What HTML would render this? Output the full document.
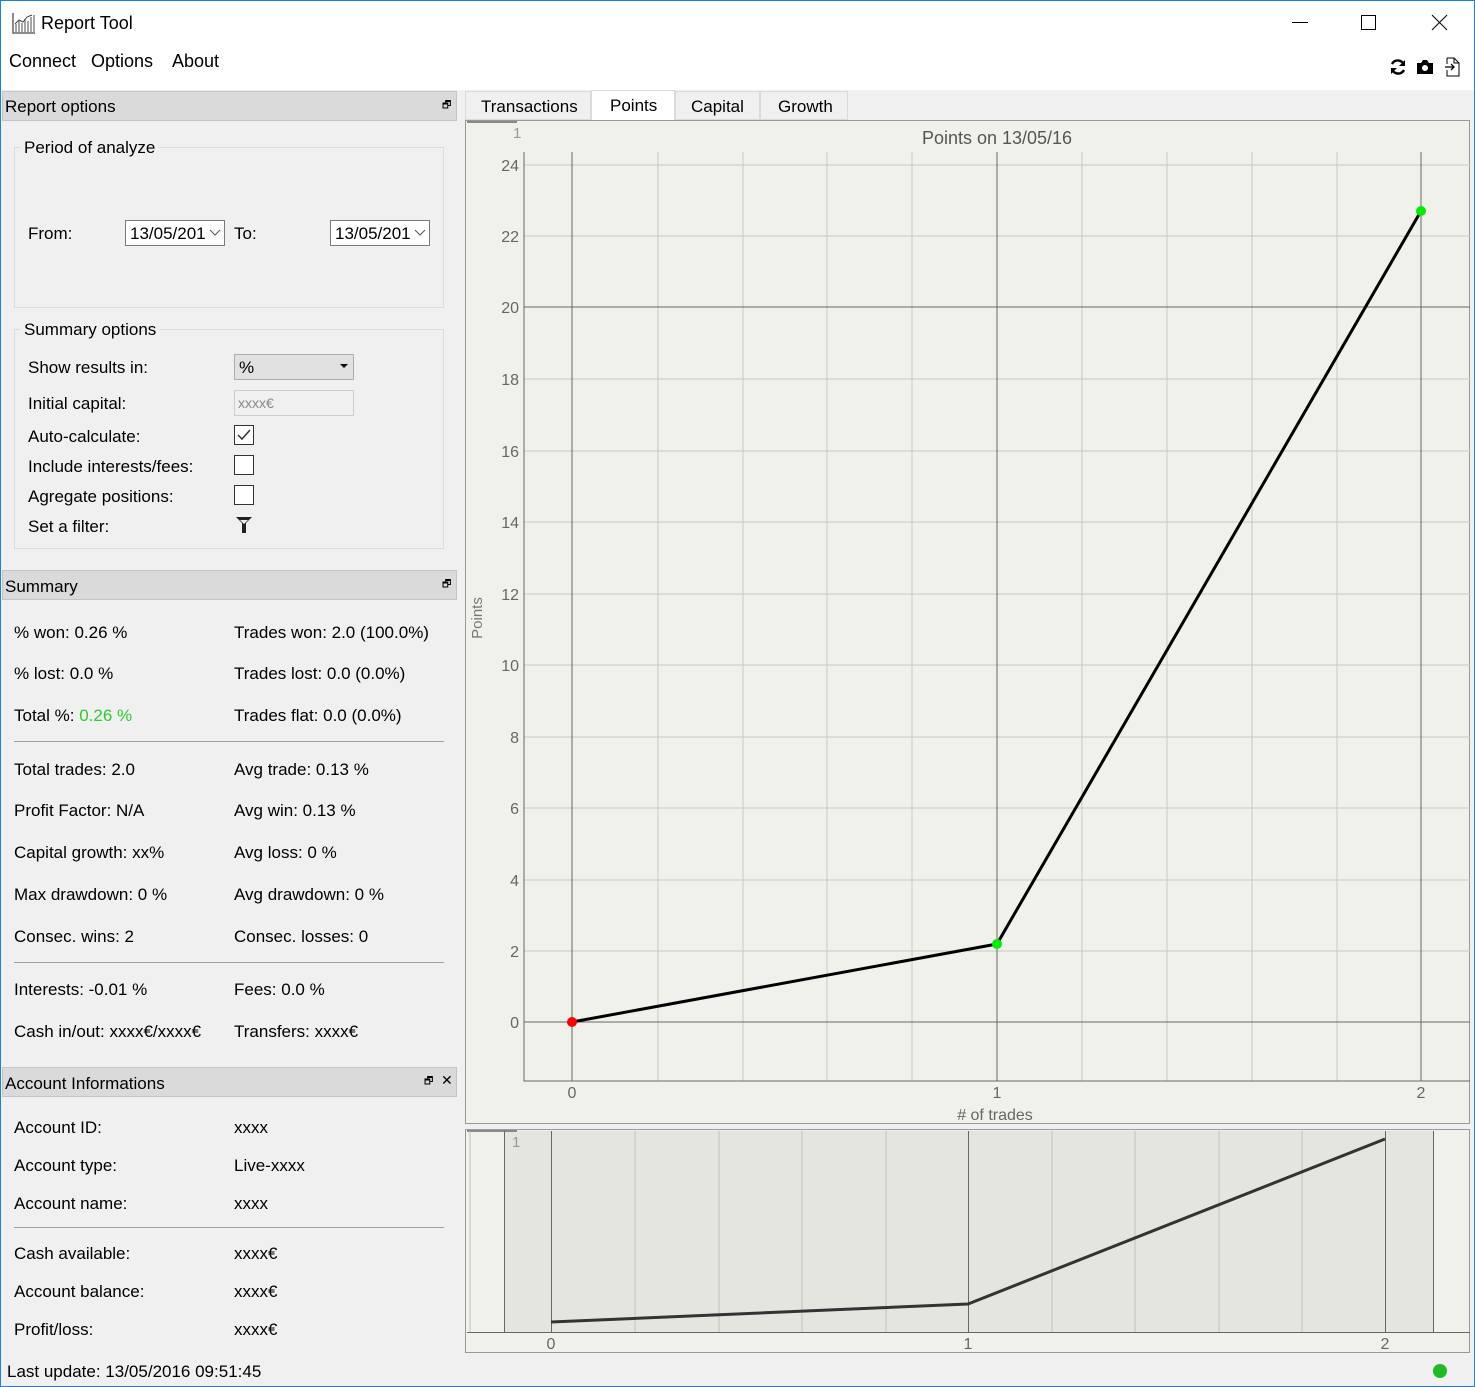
<!DOCTYPE html>
<html><head><meta charset="utf-8"><style>
*{margin:0;padding:0;box-sizing:border-box}
body{width:1475px;height:1387px;background:#f0f0f0;font-family:"Liberation Sans",sans-serif;font-size:16px;color:#000;position:relative;overflow:hidden}
.a{position:absolute;white-space:nowrap}
.win{position:absolute;left:0;top:0;width:1475px;height:1387px;border:1px solid #1883d7;pointer-events:none}
.hdr{position:absolute;left:2px;width:455px;height:30px;background:#dadada;border:1px solid #c4c4c4}
.grp{position:absolute;border:1px solid #dcdcdc}
.cb{position:absolute;width:20px;height:20px;border:1px solid #333;background:#fff}
.sep{position:absolute;left:14px;width:430px;height:1px;background:#a0a0a0}
</style></head><body>
<div class="a" style="left:0;top:0;width:1475px;height:90px;background:#fff"></div>
<svg class="a" style="left:12px;top:12px" width="24" height="22"><path d="M1 1V21H23" stroke="#666" fill="none" stroke-width="1.5"/><path d="M4 20V12M7 20V9M10 20V11M13 20V7M16 20V9M19 20V5M22 20V3" stroke="#888" stroke-width="1.5"/><path d="M3 12L7 8L11 10L15 5L20 3" stroke="#444" fill="none"/></svg>
<div class="a" style="left:41px;top:13px;font-size:18px">Report Tool</div>
<div class="a" style="left:9px;top:51px;font-size:18px">Connect</div>
<div class="a" style="left:91px;top:51px;font-size:18px">Options</div>
<div class="a" style="left:172px;top:51px;font-size:18px">About</div>
<div class="a" style="left:1292px;top:22px;width:16px;height:1px;background:#000"></div>
<div class="a" style="left:1361px;top:15px;width:15px;height:15px;border:1px solid #000"></div>
<svg class="a" style="left:1431px;top:14px" width="17" height="17"><path d="M1 1L16 16M16 1L1 16" stroke="#000"/></svg>
<svg class="a" style="left:1389px;top:58px" width="18" height="18"><path d="M15 7A6.5 6.5 0 0 0 3 6M3 11A6.5 6.5 0 0 0 15 12" stroke="#000" stroke-width="2.5" fill="none"/><path d="M16 2V8H10Z M2 16V10H8Z" fill="#000"/></svg>
<svg class="a" style="left:1416px;top:59px" width="18" height="16"><path d="M1 4H5L7 1H11L13 4H17V15H1Z" fill="#000"/><circle cx="9" cy="9" r="3" fill="#fff"/></svg>
<svg class="a" style="left:1444px;top:57px" width="16" height="20"><path d="M3 1H10L15 6V19H3V13M3 7V1M10 1V6H15" stroke="#000" fill="none"/><path d="M1 10H10M7 7L10 10L7 13" stroke="#000" fill="none" stroke-width="1.3"/></svg>

<!-- left panel -->
<div class="hdr" style="top:91px"></div>
<div class="a" style="left:5px;top:97px;font-size:17px">Report options</div>
<div class="a" style="left:442px;top:98px;font-size:10px">🗗</div>
<div class="grp" style="left:14px;top:147px;width:430px;height:161px"></div>
<div class="a" style="left:20px;top:138px;background:#f0f0f0;padding:0 4px;font-size:17px">Period of analyze</div>
<div class="a" style="left:28px;top:224px;font-size:17px">From:</div>
<div class="a" style="left:125px;top:220px;width:100px;height:26px;background:#fff;border:1px solid #7a7a7a;padding:3px 4px;font-size:17px">13/05/201</div>
<svg class="a" style="left:209px;top:229px" width="12" height="8"><path d="M1 1L6 6L11 1" stroke="#555" fill="none"/></svg>
<div class="a" style="left:234px;top:224px;font-size:17px">To:</div>
<div class="a" style="left:330px;top:220px;width:100px;height:26px;background:#fff;border:1px solid #7a7a7a;padding:3px 4px;font-size:17px">13/05/201</div>
<svg class="a" style="left:414px;top:229px" width="12" height="8"><path d="M1 1L6 6L11 1" stroke="#555" fill="none"/></svg>
<div class="grp" style="left:14px;top:329px;width:430px;height:220px"></div>
<div class="a" style="left:20px;top:320px;background:#f0f0f0;padding:0 4px;font-size:17px">Summary options</div>
<div class="a" style="left:28px;top:358px;font-size:17px">Show results in:</div>
<div class="a" style="left:234px;top:354px;width:120px;height:26px;background:#e1e1e1;border:1px solid #adadad;padding:3px 4px;font-size:17px">%</div>
<div class="a" style="left:340px;top:364px;border:4px solid transparent;border-top:4px solid #000"></div>
<div class="a" style="left:28px;top:394px;font-size:17px">Initial capital:</div>
<div class="a" style="left:234px;top:390px;width:120px;height:26px;background:#f0f0f0;border:1px solid #ccc;padding:4px 3px;color:#888;font-size:14px">xxxx€</div>
<div class="a" style="left:28px;top:427px;font-size:17px">Auto-calculate:</div>
<div class="cb" style="left:234px;top:425px"></div>
<svg class="a" style="left:236px;top:428px" width="16" height="14"><path d="M2 7L6 11L14 2" stroke="#333" stroke-width="1.5" fill="none"/></svg>
<div class="a" style="left:28px;top:457px;font-size:17px">Include interests/fees:</div>
<div class="cb" style="left:234px;top:455px"></div>
<div class="a" style="left:28px;top:487px;font-size:17px">Agregate positions:</div>
<div class="cb" style="left:234px;top:485px"></div>
<div class="a" style="left:28px;top:517px;font-size:17px">Set a filter:</div>
<svg class="a" style="left:236px;top:517px" width="16" height="16"><path d="M0 0H16L10 6V16H6V6Z" fill="#222"/><path d="M4 3H12L8 7Z" fill="#f0f0f0"/></svg>

<div class="hdr" style="top:570px"></div>
<div class="a" style="left:5px;top:577px;font-size:17px">Summary</div>
<div class="a" style="left:442px;top:577px;font-size:10px">🗗</div>
<div style="font-size:17px">
<div class="a" style="left:14px;top:623px">% won: 0.26 %</div><div class="a" style="left:234px;top:623px">Trades won: 2.0 (100.0%)</div>
<div class="a" style="left:14px;top:664px">% lost: 0.0 %</div><div class="a" style="left:234px;top:664px">Trades lost: 0.0 (0.0%)</div>
<div class="a" style="left:14px;top:706px">Total %: <span style="color:#2ccc2c">0.26 %</span></div><div class="a" style="left:234px;top:706px">Trades flat: 0.0 (0.0%)</div>
<div class="sep" style="top:741px"></div>
<div class="a" style="left:14px;top:760px">Total trades: 2.0</div><div class="a" style="left:234px;top:760px">Avg trade: 0.13 %</div>
<div class="a" style="left:14px;top:801px">Profit Factor: N/A</div><div class="a" style="left:234px;top:801px">Avg win: 0.13 %</div>
<div class="a" style="left:14px;top:843px">Capital growth: xx%</div><div class="a" style="left:234px;top:843px">Avg loss: 0 %</div>
<div class="a" style="left:14px;top:885px">Max drawdown: 0 %</div><div class="a" style="left:234px;top:885px">Avg drawdown: 0 %</div>
<div class="a" style="left:14px;top:927px">Consec. wins: 2</div><div class="a" style="left:234px;top:927px">Consec. losses: 0</div>
<div class="sep" style="top:962px"></div>
<div class="a" style="left:14px;top:980px">Interests: -0.01 %</div><div class="a" style="left:234px;top:980px">Fees: 0.0 %</div>
<div class="a" style="left:14px;top:1022px">Cash in/out: xxxx€/xxxx€</div><div class="a" style="left:234px;top:1022px">Transfers: xxxx€</div>
</div>
<div class="hdr" style="top:1067px"></div>
<div class="a" style="left:5px;top:1074px;font-size:17px">Account Informations</div>
<div class="a" style="left:424px;top:1074px;font-size:10px">🗗</div>
<div class="a" style="left:441px;top:1072px;font-size:14px">✕</div>
<div style="font-size:17px">
<div class="a" style="left:14px;top:1118px">Account ID:</div><div class="a" style="left:234px;top:1118px">xxxx</div>
<div class="a" style="left:14px;top:1156px">Account type:</div><div class="a" style="left:234px;top:1156px">Live-xxxx</div>
<div class="a" style="left:14px;top:1194px">Account name:</div><div class="a" style="left:234px;top:1194px">xxxx</div>
<div class="sep" style="top:1227px"></div>
<div class="a" style="left:14px;top:1244px">Cash available:</div><div class="a" style="left:234px;top:1244px">xxxx€</div>
<div class="a" style="left:14px;top:1282px">Account balance:</div><div class="a" style="left:234px;top:1282px">xxxx€</div>
<div class="a" style="left:14px;top:1320px">Profit/loss:</div><div class="a" style="left:234px;top:1320px">xxxx€</div>
</div>
<div class="a" style="left:7px;top:1362px;font-size:17px">Last update: 13/05/2016 09:51:45</div>
<div class="a" style="left:1433px;top:1364px;width:14px;height:14px;border-radius:50%;background:#1fbb1f"></div>

<!-- tabs -->
<div class="a" style="left:465px;top:91px;width:126px;height:29px;background:#f0f0f0;border:1px solid #dadada;padding:5px 0 0 15px;font-size:17px">Transactions</div>
<div class="a" style="left:591px;top:90px;width:84px;height:31px;background:#fff;border:1px solid #dadada;border-bottom:none;padding:5px 0 0 18px;font-size:17px">Points</div>
<div class="a" style="left:675px;top:91px;width:85px;height:29px;background:#f0f0f0;border:1px solid #dadada;padding:5px 0 0 15px;font-size:17px">Capital</div>
<div class="a" style="left:760px;top:91px;width:88px;height:29px;background:#f0f0f0;border:1px solid #dadada;padding:5px 0 0 17px;font-size:17px">Growth</div>

<svg class="a" style="left:0;top:0" width="1475" height="1387" font-family="Liberation Sans, sans-serif">
<rect x="465.5" y="120.5" width="1004" height="1003" fill="#f1f1ec" stroke="#999"/>
<line x1="467" y1="122" x2="517" y2="122" stroke="#888" stroke-width="2"/>
<text x="513" y="138" fill="#999" font-size="15">1</text>
<text x="997" y="144" text-anchor="middle" fill="#555" font-size="18">Points on 13/05/16</text>
<g stroke="#c8c8c4" fill="none">
<path d="M658 152V1081M743 152V1081M827 152V1081M912 152V1081M1082 152V1081M1167 152V1081M1252 152V1081M1337 152V1081"/>
<path d="M524 165H1470M524 236H1470M524 379H1470M524 451H1470M524 522H1470M524 594H1470M524 665H1470M524 737H1470M524 808H1470M524 880H1470M524 951H1470"/>
</g>
<g stroke="#666" fill="none"><path d="M572 152V1081M997 152V1081M1421 152V1081M524 307H1470M524 1022H1470M524 152V1081H1470"/></g>
<g fill="#666" font-size="16" text-anchor="end">
<text x="519" y="171">24</text><text x="519" y="242">22</text><text x="519" y="313">20</text><text x="519" y="385">18</text><text x="519" y="457">16</text><text x="519" y="528">14</text><text x="519" y="600">12</text><text x="519" y="671">10</text><text x="519" y="743">8</text><text x="519" y="814">6</text><text x="519" y="886">4</text><text x="519" y="957">2</text><text x="519" y="1028">0</text>
</g>
<g fill="#666" font-size="16" text-anchor="middle"><text x="572" y="1098">0</text><text x="997" y="1098">1</text><text x="1421" y="1098">2</text><text x="995" y="1120">#  of trades</text></g>
<text transform="translate(482,618) rotate(-90)" text-anchor="middle" fill="#777" font-size="15">Points</text>
<polyline points="572,1022 997,944 1421,211" fill="none" stroke="#000" stroke-width="3"/>
<circle cx="572" cy="1022" r="5" fill="#f00"/><circle cx="997" cy="944" r="5" fill="#0e0"/><circle cx="1421" cy="211" r="5" fill="#0e0"/>

<rect x="465.5" y="1129.5" width="1004" height="223" fill="#f1f1ec" stroke="#999"/>
<rect x="505" y="1131" width="928" height="201" fill="#e5e5e0"/>
<line x1="467" y1="1131" x2="517" y2="1131" stroke="#888" stroke-width="2"/>
<text x="512" y="1147" fill="#999" font-size="15">1</text>
<g stroke="#c0c0bc" fill="none"><path d="M635 1131V1332M719 1131V1332M802 1131V1332M886 1131V1332M1052 1131V1332M1135 1131V1332M1219 1131V1332M1302 1131V1332M470 1131V1332"/></g>
<g stroke="#666" fill="none"><path d="M504.5 1131V1332M551.5 1131V1332M968.5 1131V1332M1385.5 1131V1332M1433.5 1131V1332M467 1332.5H1470"/></g>
<polyline points="551,1322 968,1304 1385,1139" fill="none" stroke="#333" stroke-width="3"/>
<g fill="#666" font-size="16" text-anchor="middle"><text x="551" y="1349">0</text><text x="968" y="1349">1</text><text x="1385" y="1349">2</text></g>
</svg>
<div class="win"></div>
</body></html>
